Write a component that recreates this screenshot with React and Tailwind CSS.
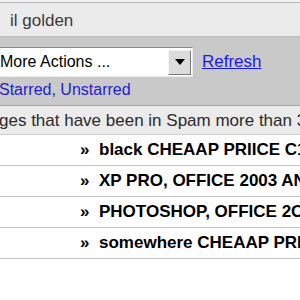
export default function App() {
  const rows = [
    "black CHEAAP PRIICE C1S3 and ADOBE",
    "XP PRO, OFFICE 2003 AND MORE",
    "PHOTOSHOP, OFFICE 2OO7 and others",
    "somewhere CHEAAP PRIICE software",
  ];

  return (
    <div className="w-[300px] h-[300px] overflow-hidden bg-white font-['Liberation_Sans',Arial,sans-serif]">
      {/* top strip */}
      <div className="h-[3px] bg-[#f2f2f2] border-b border-[#b8b8b8]" />

      {/* label header */}
      <div className="h-[34px] bg-[#ebebeb] border-b border-[#c0c0c0] flex items-center pl-[10px] pt-[2px] text-[17px] text-[#3a3a3a] whitespace-nowrap">
        il golden
      </div>

      {/* actions */}
      <div className="bg-[#c9c9c9] pt-[10px] h-[68px]">
        <div className="flex items-center">
          <div className="-ml-[2px] h-[30px] w-[195px] flex items-center bg-white border border-[#8a8a8a] border-r-[#ececec] border-b-[#ececec]">
            <span className="flex-1 pl-[1px] text-[16px] text-black whitespace-nowrap">More Actions ...</span>
            <div className="h-[25px] w-[23px] mr-[1px] bg-[#dcdcdc] border border-[#f4f4f4] border-r-[#7a7a7a] border-b-[#7a7a7a] flex items-center justify-center">
              <svg width="10" height="6" viewBox="0 0 10 6">
                <polygon points="0,0 10,0 5,6" fill="#000" />
              </svg>
            </div>
          </div>
          <a className="ml-[9px] text-[17px] text-[#1a1aee] underline whitespace-nowrap">Refresh</a>
        </div>
        <div className="mt-[3px] -ml-[1px] text-[16px] leading-[20px] text-[#2222cc] whitespace-nowrap">
          <span>Starred</span>, <span>Unstarred</span>
        </div>
      </div>

      {/* notice */}
      <div className="h-[30px] bg-[#ebebeb] border-t border-[#a8a8a8] border-b border-b-[#cfcfcf] flex items-center pt-[2px] -ml-[1px] text-[17px] text-[#2a2a2a] whitespace-nowrap overflow-hidden">
        ges that have been in Spam more than 30 days will be deleted.
      </div>

      {/* message rows */}
      {rows.map((subject) => (
        <div
          key={subject}
          className="h-[31px] border-b border-[#c4c4c4] flex items-center whitespace-nowrap overflow-hidden"
        >
          <span className="ml-[80px] w-[19px] shrink-0 inline-block text-[17px] font-bold text-black">»</span>
          <span className="text-[17px] font-bold text-black">{subject}</span>
        </div>
      ))}
    </div>
  );
}
